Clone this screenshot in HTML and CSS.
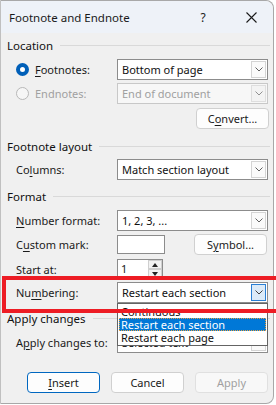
FILE: index.html
```html
<!DOCTYPE html>
<html>
<head>
<meta charset="utf-8">
<link rel="stylesheet" href="styles.css">
</head>
<body>
<div class="dlg">
  <div class="titlebar">
    <span class="title">Footnote and Endnote</span>
    <span class="help">?</span>
    <span class="close"><svg width="11" height="11" viewBox="0 0 11 11"><path d="M0.5 0.5L10.5 10.5M10.5 0.5L0.5 10.5" stroke="#1a1a1a" stroke-width="1.1" fill="none"/></svg></span>
  </div>
  <div class="body">
    <div class="group g-loc"><span>Location</span></div>
    <div class="row r-foot">
      <div class="lbl radio-lbl"><span class="radio on"></span><span><u>F</u>ootnotes:</span></div>
      <div class="combo"><span class="val">Bottom of page</span><span class="arrow"><svg width="8" height="5" viewBox="0 0 8 5"><path d="M0.5 0.5L4 4L7.5 0.5" stroke="#606060" fill="none"/></svg></span></div>
    </div>
    <div class="row r-end">
      <div class="lbl radio-lbl dis"><span class="radio"></span><span>Endnotes:</span></div>
      <div class="combo disabled"><span class="val">End of document</span><span class="arrow"><svg width="8" height="5" viewBox="0 0 8 5"><path d="M0.5 0.5L4 4L7.5 0.5" stroke="#909090" fill="none"/></svg></span></div>
    </div>
    <div class="row r-conv">
      <button class="btn">C<u>o</u>nvert...</button>
    </div>
    <div class="group g-lay"><span>Footnote layout</span></div>
    <div class="row r-cols">
      <div class="lbl">Co<u>l</u>umns:</div>
      <div class="combo"><span class="val">Match section layout</span><span class="arrow"><svg width="8" height="5" viewBox="0 0 8 5"><path d="M0.5 0.5L4 4L7.5 0.5" stroke="#606060" fill="none"/></svg></span></div>
    </div>
    <div class="group g-fmt"><span>Format</span></div>
    <div class="row r-num">
      <div class="lbl"><u>N</u>umber format:</div>
      <div class="combo"><span class="val">1, 2, 3, ...</span><span class="arrow"><svg width="8" height="5" viewBox="0 0 8 5"><path d="M0.5 0.5L4 4L7.5 0.5" stroke="#606060" fill="none"/></svg></span></div>
    </div>
    <div class="row r-mark">
      <div class="lbl">C<u>u</u>stom mark:</div>
      <div class="markbox"></div>
      <button class="btn">S<u>y</u>mbol...</button>
    </div>
    <div class="row r-start">
      <div class="lbl">Start at:</div>
      <div class="spin"><span class="sval">1</span><span class="spinbtns"><span class="sb up"></span><span class="sb down"></span></span></div>
    </div>
    <div class="row r-numb">
      <div class="lbl">Nu<u>m</u>bering:</div>
      <div class="combo focus"><span class="val">Restart each section</span><span class="arrow"><svg width="8" height="5" viewBox="0 0 8 5"><path d="M0.5 0.5L4 4L7.5 0.5" stroke="#404040" fill="none"/></svg></span></div>
    </div>
    <div class="group g-app"><span>Apply changes</span></div>
    <div class="row r-app">
      <div class="lbl">A<u>p</u>ply changes to:</div>
      <div class="combo"><span class="val">Selected text</span><span class="arrow"><svg width="8" height="5" viewBox="0 0 8 5"><path d="M0.5 0.5L4 4L7.5 0.5" stroke="#606060" fill="none"/></svg></span></div>
    </div>
    <div class="buttons">
      <button class="btn default"><u>I</u>nsert</button>
      <button class="btn">Cancel</button>
      <button class="btn dis">Apply</button>
    </div>
  </div>
  <div class="list">
    <div class="item">Continuous</div>
    <div class="item sel">Restart each section</div>
    <div class="item">Restart each page</div>
  </div>
  <div class="redbox"></div>
</div>
</body>
</html>
```
FILE: styles.css
```css
* { box-sizing: border-box; }
html, body { margin: 0; padding: 0; background: #ffffff; }
body {
  font-family: "Noto Sans", "Open Sans", sans-serif;
  font-size: 11px;
  color: #1a1a1a;
  overflow: hidden;
}
u { text-decoration-thickness: 1px; text-underline-offset: 2px; }
.dlg {
  position: relative;
  width: 274px;
  height: 404px;
  background: #f0f0f0;
  border: 1px solid #a8a8a8;
  border-left-color: #c0c0c0;
  border-radius: 0 8px 8px 0;
}
.titlebar {
  height: 32px;
  background: #eef2f8;
  display: flex;
  align-items: center;
  border-radius: 0 8px 0 0;
}
.title { margin-left: 8px; flex: 1; font-size: 11.5px; }
.help { width: 14px; text-align: center; margin-right: 36px; font-size: 12px; }
.close { width: 12px; height: 11px; display: flex; margin-right: 15px; }
.body { display: flex; flex-direction: column; }
.group {
  display: flex;
  align-items: center;
  height: 16px;
  padding-left: 6px;
  padding-right: 3px;
  color: #111;
  font-size: 11.5px;
}
.group::after {
  content: "";
  flex: 1;
  border-top: 1px solid #d9d9d9;
  margin-left: 7px;
}
.g-loc { margin-top: 4px; }
.g-lay { margin-top: 9px; }
.g-fmt { margin-top: 8px; }
.g-app { margin-top: 7px; }
.row {
  display: flex;
  align-items: center;
  height: 21px;
  padding-left: 15px;
}
.r-foot { margin-top: 6px; }
.r-end { margin-top: 3px; }
.r-conv { margin-top: 4px; justify-content: flex-end; padding-right: 4px; }
.r-cols { margin-top: 5px; }
.r-num { margin-top: 6px; }
.r-mark { margin-top: 3px; }
.r-start { margin-top: 4px; height: 20px; }
.r-numb { margin-top: 3px; }
.r-app { margin-top: 6px; }
.lbl { width: 101px; flex: none; white-space: nowrap; }
.radio-lbl { display: flex; align-items: center; }
.radio-lbl .radio { margin-right: 6px; }
.radio {
  width: 13px; height: 13px; border-radius: 50%;
  border: 1px solid #b8b8b8; background: #f6f6f6; flex: none;
}
.radio.on {
  background: #ffffff;
  border: 4px solid #005fb8;
}
.lbl.dis { color: #a0a0a0; }
.combo {
  width: 151px; height: 21px; flex: none;
  border: 1px solid #8c8c8c;
  background: #ffffff;
  display: flex; align-items: center;
  padding: 1px;
}
.combo .val { flex: 1; padding-left: 3px; white-space: nowrap; overflow: hidden; color: #111; }
.combo .arrow {
  width: 15px; height: 17px;
  border: 1px solid #d4d4d4;
  background: #fafafa;
  display: flex; align-items: center; justify-content: center;
}
.combo.disabled { background: #f7f7f7; border-color: #c8c8c8; }
.combo.disabled .val { color: #a0a0a0; }
.combo.disabled .arrow { border-color: #dedede; background: #f3f3f3; }
.combo.focus .arrow { border: 1px solid #2a7fd4; background: #dbeaf8; }
.btn {
  font: inherit;
  color: #1a1a1a;
  width: 73px; height: 21px;
  border: 1px solid #d0d0d0;
  border-radius: 4px;
  background: #fdfdfd;
  padding: 0;
  text-align: center;
}
.btn.default { border: 1px solid #0067c0; }
.btn.dis { color: #a0a0a0; border-color: #e0e0e0; background: #f8f8f8; }
.markbox {
  width: 48px; height: 19px;
  border: 1px solid #8c8c8c;
  background: #fff;
  margin-right: 29px;
}
.spin {
  width: 46px; height: 20px;
  border: 1px solid #8c8c8c;
  background: #fff;
  display: flex;
}
.sval { flex: 1; padding-left: 3px; line-height: 18px; }
.spinbtns { width: 14px; display: flex; flex-direction: column; }
.sb { flex: 1; border: 1px solid #cfcfcf; background: #f2f2f2; position: relative; }
.sb.up::after, .sb.down::after {
  content: ""; position: absolute; left: 3px; top: 2px;
  border-left: 3px solid transparent; border-right: 3px solid transparent;
}
.sb.up::after { border-bottom: 4px solid #222; }
.sb.down::after { border-top: 4px solid #222; }
.buttons {
  display: flex; justify-content: flex-end; gap: 11px;
  margin-top: 19px; padding-right: 5px;
}
.list {
  position: absolute;
  left: 116px; top: 302px;
  width: 151px;
  border: 1px solid #646464;
  background: #fff;
  padding: 1px 1px;
}
.item { height: 13px; line-height: 13px; padding-left: 2px; white-space: nowrap; color: #111; }
.item.sel {
  background: #0078d7; color: #fff;
  outline: 1px dotted #e8a040; outline-offset: -1px;
}
.redbox {
  position: absolute;
  left: 1px; top: 275px;
  width: 274px; height: 37px;
  border: 4px solid #ed1c24;
  border-right: 0;
  pointer-events: none;
}
```
